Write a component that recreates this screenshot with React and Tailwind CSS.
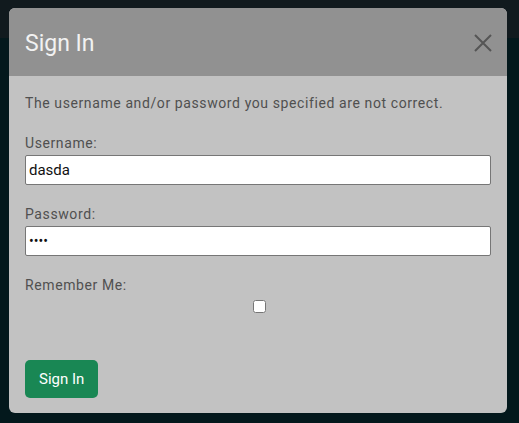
import React from 'react';

const App = () => {
  return (
    <div className="relative w-[519px] h-[423px] overflow-hidden bg-[#03181c] font-['Roboto',sans-serif]">
      <div className="absolute inset-x-0 top-0 h-[38px] bg-[#111a1e]"></div>

      <div className="absolute left-[9px] top-[8px] w-[498px] h-[405px] rounded-[6px] overflow-hidden bg-[#c2c2c2] flex flex-col">
        <div className="h-[68px] shrink-0 bg-[#919191] flex items-center justify-between pl-[16px] pr-[14px]">
          <h2 className="text-[23px] text-[#f2f2f2] leading-none pt-[2px]">Sign In</h2>
          <svg width="20" height="20" viewBox="0 0 20 20" className="mt-[1px]">
            <path d="M2 2 L18 18 M18 2 L2 18" stroke="#555" strokeWidth="2" />
          </svg>
        </div>

        <div className="flex flex-col px-[16px] pt-[19px] text-[14px] text-[#505050] tracking-[0.6px]">
          <p className="leading-[17px]">The username and/or password you specified are not correct.</p>

          <label className="mt-[23px] leading-[17px]">Username:</label>
          <input
            type="text"
            defaultValue="dasda"
            className="mt-[3px] h-[30px] w-[466px] bg-white border border-[#767676] rounded-[2px] px-[3px] text-[15px] text-[#111] tracking-normal outline-none"
          />

          <label className="mt-[21px] leading-[17px]">Password:</label>
          <input
            type="password"
            defaultValue="dasd"
            className="mt-[3px] h-[30px] w-[466px] bg-white border border-[#767676] rounded-[2px] px-[3px] text-[14px] text-[#111] tracking-normal outline-none"
          />

          <label className="mt-[21px] leading-[17px]">Remember Me:</label>
          <div className="flex justify-center mt-[6px] pl-[2px]">
            <input type="checkbox" className="w-[13px] h-[13px]" />
          </div>

          <div className="mt-[47px]">
            <button className="h-[38px] px-[14px] rounded-[5px] bg-[#198754] text-white text-[15px] tracking-normal">Sign In</button>
          </div>
        </div>
      </div>
    </div>
  );
};

export default App;
